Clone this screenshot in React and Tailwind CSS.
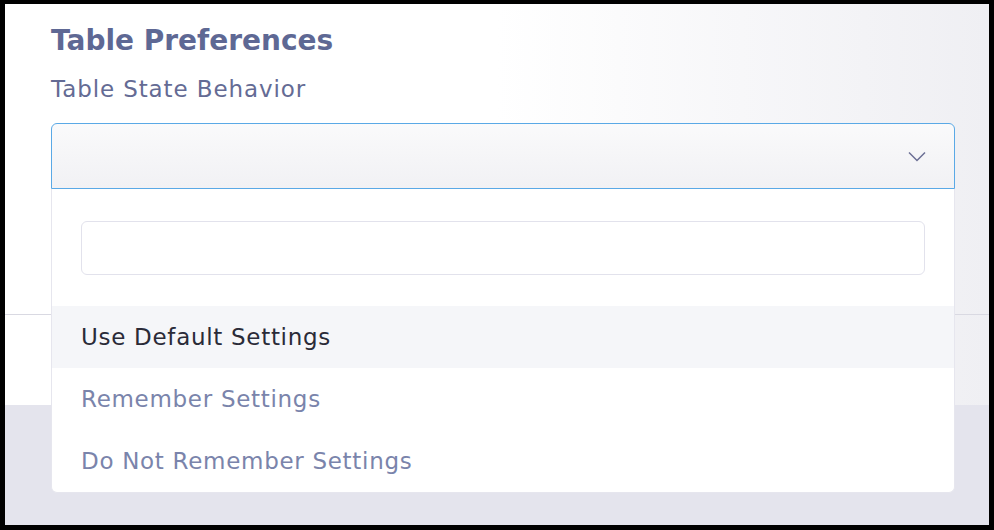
const options = [
  { label: "Use Default Settings", active: true },
  { label: "Remember Settings" },
  { label: "Do Not Remember Settings" },
];

const Chevron = () => (
  <svg width="18" height="11" viewBox="0 0 18 11" fill="none">
    <path d="M1 1.5 L9 9.5 L17 1.5" stroke="#6b6f94" strokeWidth="1.5" />
  </svg>
);

const App = () => {
  return (
    <div
      className="w-[994px] h-[530px] border-black border-t-4 border-l-[5px] border-r-[5px] border-b-[5px] bg-[#e4e4ed] flex flex-col overflow-hidden"
      style={{ fontFamily: "'DejaVu Sans', 'Open Sans', sans-serif" }}
    >
      <div className="relative h-[401px] flex flex-col bg-gradient-to-r from-white via-white to-[#efeff3]">
        <div className="h-[310px] px-[46px] pt-[18px] flex flex-col">
          <h1 className="text-[28px] leading-[38px] font-bold text-[#5e6894]">
            Table Preferences
          </h1>
          <label className="mt-[14px] text-[23px] leading-[30px] tracking-[0.9px] text-[#646b94]">
            Table State Behavior
          </label>
          <div className="relative mt-[19px]">
            <button
              type="button"
              className="w-[904px] h-[66px] border border-[#5aa9e6] rounded-t-md bg-gradient-to-b from-[#fafafb] to-[#f1f1f4] flex items-center justify-end pr-[28px]"
            >
              <Chevron />
            </button>
            <div className="absolute left-0 top-[66px] w-[904px] h-[304px] bg-white border-x border-b border-[#e6e6ee] rounded-b-md flex flex-col z-10">
              <div className="px-[29px] pt-[32px] pb-[31px]">
                <input className="w-full h-[54px] border border-[#e2e2ec] rounded-md bg-white outline-none" />
              </div>
              {options.map((o) => (
                <div
                  key={o.label}
                  className={`h-[62px] px-[29px] flex items-center text-[23px] tracking-[0.7px] ${
                    o.active ? "bg-[#f5f6f9] text-[#2a2b38]" : "text-[#7a84ab]"
                  }`}
                >
                  {o.label}
                </div>
              ))}
            </div>
          </div>
        </div>
        <div className="flex-1 border-t border-[#d9d9e2]"></div>
      </div>
      <div className="flex-1"></div>
    </div>
  );
};

export default App;
